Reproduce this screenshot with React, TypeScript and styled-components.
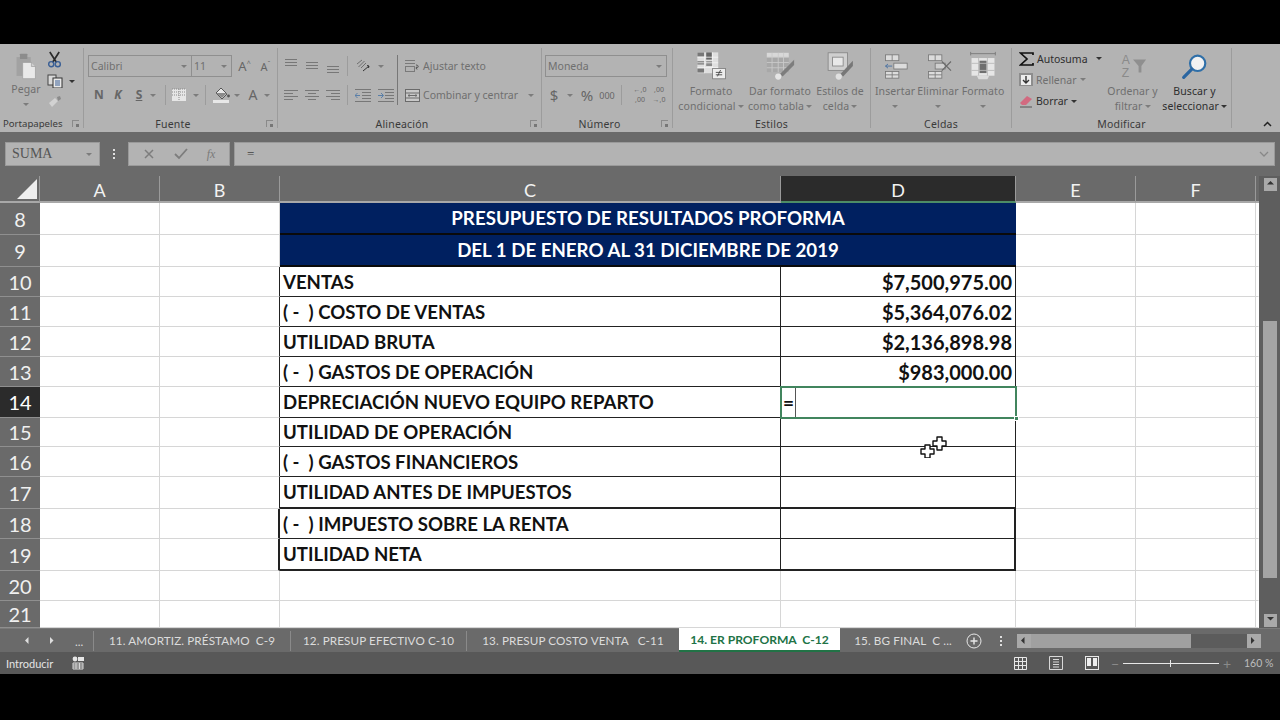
import React from "react";
import styled, { createGlobalStyle } from "styled-components";

const Global = createGlobalStyle`
  html, body { margin: 0; padding: 0; background: #000; }
  * { box-sizing: border-box; }
  #root { width: 1280px; height: 720px; overflow: hidden; }
`;

const UI = `"Noto Sans", "Open Sans", "Liberation Sans", sans-serif`;
const CAL = `Lato, "Open Sans", sans-serif`;
const HEAD = "#6a6a6a";
const RIB = "#b3b3b3";
const DIM = "#6f6f6f";
const INK = "#2e2e2e";

const Page = styled.div`
  width: 1280px;
  height: 720px;
  display: flex;
  flex-direction: column;
  background: #000;
  font-family: ${UI};
`;
const BlackBar = styled.div<{ $h: number }>`
  height: ${(p) => p.$h}px;
  flex: none;
  background: #000;
`;

/* ---------- ribbon ---------- */
const Ribbon = styled.div`
  height: 88px;
  flex: none;
  display: flex;
  background: ${RIB};
  position: relative;
`;
const Group = styled.section<{ $w: number }>`
  width: ${(p) => p.$w}px;
  flex: none;
  margin: 4px 0 4px;
  border-right: 1px solid #9c9c9c;
  display: flex;
  flex-direction: column;
`;
const GroupBody = styled.div<{ $pad?: number }>`
  flex: 1;
  min-height: 0;
  display: flex;
  padding-left: ${(p) => p.$pad ?? 0}px;
`;
const GroupLabel = styled.div<{ $launch?: boolean; $left?: boolean }>`
  height: 16px;
  flex: none;
  position: relative;
  text-align: ${(p) => (p.$left ? "left" : "center")};
  padding-left: ${(p) => (p.$left ? 3 : 0)}px;
  padding-right: ${(p) => (p.$launch ? 15 : 0)}px;
  font-size: ${(p) => (p.$left ? 9.6 : 10.5)}px;
  line-height: 24px;
  color: #3a3a3a;
  letter-spacing: ${(p) => (p.$left ? 0 : 0.2)}px;
  white-space: nowrap;
`;
const Launcher = styled.span`
  position: absolute;
  right: 4px;
  top: 8px;
  width: 7px;
  height: 7px;
  border-left: 1px solid #8a8a8a;
  border-top: 1px solid #8a8a8a;
  &::after {
    content: "";
    position: absolute;
    right: 0;
    bottom: 0;
    width: 3px;
    height: 3px;
    background: #777;
  }
`;
const Stack = styled.div<{ $gap?: number; $pt?: number; $center?: boolean }>`
  display: flex;
  flex-direction: column;
  flex: none;
  align-items: ${(p) => (p.$center ? "center" : "stretch")};
  gap: ${(p) => p.$gap ?? 0}px;
  padding-top: ${(p) => p.$pt ?? 0}px;
`;
const Line = styled.div<{ $gap?: number; $h?: number }>`
  display: flex;
  align-items: center;
  gap: ${(p) => p.$gap ?? 0}px;
  height: ${(p) => p.$h ?? 22}px;
`;
const Caret = styled.i<{ $dark?: boolean }>`
  display: inline-block;
  flex: none;
  width: 0;
  height: 0;
  border-left: 3px solid transparent;
  border-right: 3px solid transparent;
  border-top: 3px solid ${(p) => (p.$dark ? "#333" : "#7c7c7c")};
`;
const Combo = styled.div<{ $w: number; $noLeft?: boolean }>`
  width: ${(p) => p.$w}px;
  height: 22px;
  flex: none;
  border: 1px solid #8f8f8f;
  margin-left: ${(p) => (p.$noLeft ? -1 : 0)}px;
  display: flex;
  align-items: center;
  justify-content: space-between;
  padding: 0 4px 0 2px;
  font-size: 10.5px;
  color: ${DIM};
`;
const Glyph = styled.span<{ $w: number; $size?: number; $weight?: number; $dark?: boolean }>`
  width: ${(p) => p.$w}px;
  flex: none;
  text-align: center;
  font-size: ${(p) => p.$size ?? 12}px;
  font-weight: ${(p) => p.$weight ?? 400};
  color: ${(p) => (p.$dark ? "#333" : "#666")};
  line-height: 1;
`;
const SuperMark = styled.sup`
  font-size: 7px;
  line-height: 0;
  vertical-align: 5px;
`;
const DecStack = styled.span`
  width: 18px;
  flex: none;
  display: flex;
  flex-direction: column;
  align-items: center;
  font-size: 7px;
  line-height: 10px;
  color: #666;
  white-space: nowrap;
`;
const VSep = styled.span<{ $h?: number; $dark?: boolean }>`
  width: 1px;
  height: ${(p) => p.$h ?? 20}px;
  flex: none;
  background: ${(p) => (p.$dark ? "#777" : "#9c9c9c")};
`;
const Small = styled.span<{ $dark?: boolean }>`
  font-size: 10.5px;
  color: ${(p) => (p.$dark ? "#2e2e2e" : DIM)};
  white-space: nowrap;
`;
const BigBtn = styled.div<{ $w: number }>`
  width: ${(p) => p.$w}px;
  flex: none;
  display: flex;
  flex-direction: column;
  align-items: center;
  font-size: 10.5px;
  line-height: 15px;
  color: ${DIM};
  text-align: center;
  white-space: nowrap;
  letter-spacing: 0.1px;
`;
const BigIcon = styled.div`
  height: 36px;
  flex: none;
  display: flex;
  align-items: center;
  justify-content: center;
`;
const BtnText = styled.div<{ $dark?: boolean }>`
  color: ${(p) => (p.$dark ? INK : DIM)};
  display: flex;
  align-items: center;
  gap: 2px;
  justify-content: center;
  height: 15px;
  flex: none;
`;
const Collapse = styled.svg`
  position: absolute;
  right: 8px;
  bottom: 5px;
`;

/* ---------- formula bar ---------- */
const FormulaBand = styled.div`
  height: 44px;
  flex: none;
  background: ${HEAD};
  display: flex;
  align-items: center;
  padding: 0 5px;
`;
const NameBox = styled.div`
  width: 95px;
  height: 24px;
  background: ${RIB};
  border: 1px solid #9a9a9a;
  font-family: "Liberation Serif", serif;
  font-size: 14px;
  color: #555;
  display: flex;
  align-items: center;
  justify-content: space-between;
  padding: 0 7px 0 6px;
`;
const Dots = styled.div`
  width: 28px;
  display: flex;
  flex-direction: column;
  align-items: center;
  gap: 2px;
  & > i {
    width: 2px;
    height: 2px;
    background: #e0e0e0;
  }
`;
const FxBox = styled.div`
  width: 102px;
  height: 24px;
  background: ${RIB};
  border: 1px solid #9a9a9a;
  display: flex;
  align-items: center;
  justify-content: space-around;
  padding: 0 4px;
  margin-right: 4px;
`;
const FxText = styled.span`
  font-family: "Liberation Serif", serif;
  font-style: italic;
  font-size: 12px;
  color: #7a7a7a;
`;
const FormulaInput = styled.div`
  flex: 1;
  height: 24px;
  background: ${RIB};
  border: 1px solid #9a9a9a;
  display: flex;
  align-items: center;
  justify-content: space-between;
  padding: 0 5px 0 12px;
  font-family: "Liberation Serif", serif;
  font-size: 13px;
  color: #444;
`;

/* ---------- sheet ---------- */
const Sheet = styled.div`
  height: 452px;
  flex: none;
  display: flex;
  background: ${HEAD};
  position: relative;
`;
const GridWrap = styled.div`
  width: 1259px;
  flex: none;
  display: grid;
  grid-template-columns: 40px 120px 120px 501px 235px 120px 120px 3px;
  grid-template-rows: 27px 32px 32px 30px 30px 30px 30px 31px 29px 30px 32px 30px 32px 30px 27px;
  background: #fff;
`;
const Corner = styled.div`
  background: ${HEAD};
  border-bottom: 2px solid #a8a8a8;
  border-right: 1px solid #999;
  position: relative;
  &::after {
    content: "";
    position: absolute;
    right: 2px;
    bottom: 2px;
    width: 0;
    height: 0;
    border-left: 20px solid transparent;
    border-bottom: 20px solid #eee;
  }
`;
const ColHead = styled.div<{ $active?: boolean; $blank?: boolean }>`
  background: ${(p) => (p.$active ? "#2b2b2b" : HEAD)};
  border-bottom: 2px solid ${(p) => (p.$active ? "#4d8c66" : "#a8a8a8")};
  border-right: ${(p) => (p.$blank ? "none" : "1px solid #9a9a9a")};
  color: #f2f2f2;
  font-family: ${CAL};
  font-size: 18px;
  display: flex;
  align-items: center;
  justify-content: center;
  padding-top: 2px;
`;
const RowHead = styled.div<{ $active?: boolean }>`
  background: ${(p) => (p.$active ? "#2b2b2b" : HEAD)};
  border-bottom: 1px solid #8f8f8f;
  color: ${(p) => (p.$active ? "#fff" : "#f0f0f0")};
  font-family: ${CAL};
  font-size: 20px;
  display: flex;
  align-items: center;
  justify-content: center;
`;
const Blank = styled.div<{ $right?: string; $bottom?: string; $thick?: boolean }>`
  background: #fff;
  border-right: ${(p) => (p.$thick ? 2 : 1)}px solid ${(p) => p.$right ?? "#d6d6d6"};
  border-bottom: 1px solid ${(p) => p.$bottom ?? "#d6d6d6"};
`;
const TitleCell = styled.div`
  grid-column: span 2;
  background: #002060;
  color: #fff;
  font-family: ${CAL};
  font-weight: 700;
  font-size: 18.7px;
  display: flex;
  align-items: center;
  justify-content: center;
  border-bottom: 2px solid #0a0a0a;
`;
const DataCell = styled.div<{ $amount?: boolean; $heavyBottom?: boolean; $heavyRight?: boolean }>`
  background: #fff;
  border-right: ${(p) => (p.$heavyRight ? 2 : 1)}px solid #222;
  border-bottom: ${(p) => (p.$heavyBottom ? 2 : 1)}px solid #222;
  color: #111;
  font-family: ${CAL};
  font-weight: 700;
  font-size: ${(p) => (p.$amount ? 20 : 18.6)}px;
  white-space: pre;
  display: flex;
  align-items: center;
  justify-content: ${(p) => (p.$amount ? "flex-end" : "flex-start")};
  padding: 0 ${(p) => (p.$amount ? 3 : 0)}px 0 ${(p) => (p.$amount ? 0 : 3)}px;
`;
const ActiveCell = styled.div`
  background: #fff;
  position: relative;
  border: 2px solid #41855e;
  margin: -1px 0 -1px -1px;
  width: calc(100% + 2px);
  display: flex;
  z-index: 2;
`;
const Editor = styled.div`
  width: 14px;
  height: 100%;
  border-right: 1px solid #555;
  color: #111;
  font-family: ${CAL};
  font-weight: 700;
  font-size: 19px;
  line-height: 30px;
  text-align: center;
`;
const FillHandle = styled.span`
  position: absolute;
  right: -4px;
  bottom: -4px;
  width: 5px;
  height: 5px;
  background: #41855e;
  border: 1px solid #fff;
`;
const CursorMark = styled.svg`
  position: absolute;
  left: 920px;
  top: 258px;
  z-index: 3;
`;
const VScroll = styled.div`
  flex: 1;
  display: flex;
  flex-direction: column;
  align-items: center;
  padding: 2px 3px 1px 4px;
  background: #5e5e5e;
`;
const ScrollBtn = styled.div`
  width: 13px;
  height: 13px;
  flex: none;
  background: #a9a9a9;
  display: flex;
  align-items: center;
  justify-content: center;
`;
const VTrack = styled.div`
  flex: 1;
  width: 100%;
  display: flex;
  flex-direction: column;
  padding-top: 130px;
  padding-bottom: 36px;
`;
const VThumb = styled.div`
  flex: 1;
  background: #a4a4a4;
`;

/* ---------- tabs ---------- */
const TabBar = styled.div`
  height: 24px;
  flex: none;
  background: ${HEAD};
  display: flex;
  align-items: center;
  font-family: ${CAL};
  font-size: 11.7px;
  color: #dcdcdc;
  border-top: 1px solid #7a7a7a;
`;
const TabNav = styled.div`
  width: 94px;
  height: 20px;
  flex: none;
  display: flex;
  align-items: center;
  padding-left: 25px;
  gap: 18px;
  border-right: 1px solid #8a8a8a;
`;
const Tab = styled.div<{ $w: number; $sep?: boolean }>`
  width: ${(p) => p.$w}px;
  height: 20px;
  flex: none;
  display: flex;
  align-items: center;
  justify-content: center;
  white-space: pre;
  border-right: ${(p) => (p.$sep ? "1px solid #8a8a8a" : "none")};
  letter-spacing: 0.1px;
  padding-bottom: 1px;
`;
const ActiveTab = styled.div`
  width: 161px;
  height: 24px;
  flex: none;
  margin-top: -1px;
  background: #fff;
  color: #217346;
  font-size: 12.1px;
  font-weight: 700;
  display: flex;
  align-items: center;
  justify-content: center;
  white-space: pre;
  border-bottom: 2px solid #217346;
`;
const TabTools = styled.div`
  width: 51px;
  flex: none;
  display: flex;
  align-items: center;
  gap: 18px;
`;
const MoreDots = styled(Dots)`
  width: auto;
`;
const HScroll = styled.div`
  width: 244px;
  height: 14px;
  flex: none;
  background: #5c5c5c;
  display: flex;
`;
const HBtn = styled(ScrollBtn)`
  width: 14px;
  height: 14px;
`;
const HThumb = styled.div`
  width: 160px;
  background: #a0a0a0;
`;
const Spacer = styled.div`
  flex: 1;
`;

/* ---------- status ---------- */
const StatusBar = styled.div`
  height: 22px;
  flex: none;
  background: #585858;
  display: flex;
  align-items: center;
  padding: 0 8px 0 6px;
  color: #e4e4e4;
  font-family: ${CAL};
  font-size: 11px;
`;
const StatusLeft = styled.div`
  display: flex;
  align-items: center;
  gap: 19px;
  flex: 1;
`;
const ViewIcons = styled.div`
  display: flex;
  align-items: center;
  gap: 22px;
  margin-right: 12px;
`;
const Zoomer = styled.div`
  display: flex;
  align-items: center;
  gap: 4px;
  width: 120px;
  color: #8a8a8a;
  font-size: 14px;
`;
const Slider = styled.div`
  flex: 1;
  height: 1px;
  background: #e8e8e8;
  position: relative;
  &::after {
    content: "";
    position: absolute;
    left: 47px;
    top: -3px;
    width: 1px;
    height: 7px;
    background: #e8e8e8;
  }
`;
const ZoomPct = styled.span`
  margin-left: 13px;
  width: 28px;
  color: #bdbdbd;
  font-size: 10.5px;
  white-space: nowrap;
`;

/* ---------- icons ---------- */
const Align = ({ y, mode }: { y: number; mode: "l" | "c" | "r" }) => {
  const rows = [0, 3, 6, 9];
  return (
    <svg width="14" height="14" viewBox="0 0 14 14" stroke="#777" strokeWidth="1">
      {rows.map((r, i) => {
        const short = i % 2 === 1;
        const x1 = mode === "l" ? 0 : mode === "c" ? (short ? 3 : 0) : short ? 5 : 0;
        const x2 = mode === "l" ? (short ? 9 : 14) : mode === "c" ? (short ? 11 : 14) : 14;
        return <line key={r} x1={x1} x2={x2} y1={y + r + 0.5} y2={y + r + 0.5} />;
      })}
    </svg>
  );
};
const VAlign = ({ y }: { y: number }) => (
  <svg width="14" height="14" viewBox="0 0 14 14" stroke="#777">
    {[0, 3, 6].map((r) => (
      <line key={r} x1="1" x2="13" y1={y + r + 0.5} y2={y + r + 0.5} />
    ))}
  </svg>
);
const Indent = ({ flip }: { flip?: boolean }) => (
  <svg width="16" height="14" viewBox="0 0 16 14" stroke="#777" fill="none">
    <path d="M0 1.5h16M7 4.5h9M7 7.5h9M7 10.5h9M0 13.5h16" />
    <path d={flip ? "M0 7.5h5M3 5l2.5 2.5L3 10" : "M5 7.5H0M2.5 5L0 7.5 2.5 10"} stroke="#5a7fa8" />
  </svg>
);
const Paste = () => (
  <svg width="26" height="28" viewBox="0 0 30 40">
    <rect x="1" y="6" width="21" height="28" fill="#a2a2a2" />
    <rect x="6" y="1" width="11" height="8" rx="1" fill="#8c8c8c" />
    <path d="M10 14h13l6 6v18H10z" fill="#e9e9e9" stroke="#9a9a9a" />
    <path d="M23 14v6h6" fill="#cfcfcf" stroke="#9a9a9a" />
  </svg>
);
const Scissors = () => (
  <svg width="15" height="17" viewBox="0 0 16 18" fill="none">
    <path d="M3 1l7 11M13 1L6 12" stroke="#2b2b2b" strokeWidth="1.8" />
    <circle cx="4.5" cy="14" r="2.7" stroke="#3a5f95" strokeWidth="1.5" />
    <circle cx="11.5" cy="14" r="2.7" stroke="#3a5f95" strokeWidth="1.5" />
  </svg>
);
const CopyIcon = () => (
  <svg width="16" height="14" viewBox="0 0 16 14">
    <rect x="1" y="1" width="8" height="10" fill="#d9d9d9" stroke="#444" />
    <rect x="6" y="4" width="9" height="10" fill="#e8e8e8" stroke="#333" />
    <path d="M8 7h5M8 9h5M8 11h5" stroke="#3a5f95" />
  </svg>
);
const Painter = () => (
  <svg width="16" height="14" viewBox="0 0 16 14">
    <path d="M2 8l6-5 3 3-6 6z" fill="#d2d2d2" />
    <path d="M10 2l3-1 1 3-3 2z" fill="#8a8a8a" />
  </svg>
);
const Borders = () => (
  <svg width="16" height="14" viewBox="0 0 16 14">
    <rect x="1" y="1" width="14" height="12" fill="#e6e6e6" />
    <path d="M1 1h14M1 4h14M1 7h14M8 1v12" stroke="#8a8a8a" strokeDasharray="1 1" />
  </svg>
);
const Fill = () => (
  <svg width="18" height="16" viewBox="0 0 18 16">
    <path d="M8 1l6 6-5 5-6-6z" fill="#e8e8e8" stroke="#555" />
    <path d="M3 6h11l-5 5z" fill="#8a8a8a" />
    <circle cx="15.5" cy="9" r="1.4" fill="#555" />
    <rect x="0" y="13" width="16" height="3" fill="#e8e8e8" />
  </svg>
);
const Orient = () => (
  <svg width="16" height="14" viewBox="0 0 16 14" fill="none" stroke="#6e6e6e">
    <path d="M2 5l5-4M3.5 8l6-6M6 9l5-5" />
    <path d="M8 12l6-5M12 6.5l2 .5-.5 2" stroke="#333" />
  </svg>
);
const Wrap = () => (
  <svg width="17" height="14" viewBox="0 0 17 14" fill="none" stroke="#7a7a7a">
    <path d="M1 1.5h10M1 4.5h10" />
    <rect x="1.5" y="7.5" width="9" height="5" />
    <path d="M12 6c3 0 3 3 0 3l1-1.5M12 9l1 1.5" stroke="#555" />
  </svg>
);
const Merge = () => (
  <svg width="17" height="15" viewBox="0 0 17 15" fill="none" stroke="#6a6a6a">
    <rect x="1.5" y="1.5" width="14" height="12" fill="#c8c8c8" />
    <path d="M1.5 5h14M1.5 10h14M4 7.5h9M4 7.5l1.5-1M4 7.5l1.5 1M13 7.5l-1.5-1M13 7.5l-1.5 1" />
  </svg>
);
const CondFmt = () => (
  <svg width="32" height="28" viewBox="0 0 40 34">
    <rect x="3" y="0" width="26" height="26" fill="#dfdfdf" />
    <path d="M3 0h9v5H3zM3 11h9v4H3zM3 20h9v5H3z" fill="#777" />
    <path d="M14 0h7v9h-7z" fill="#666" />
    <path d="M14 11h8v6h-8z" fill="#8a8a8a" />
    <path d="M3 6h26M3 13h26M3 19h26M12 0v26M22 0v26" stroke="#f4f4f4" />
    <rect x="22" y="20" width="16" height="13" fill="#ededed" stroke="#777" />
    <path d="M26 25h8M26 28h8M28 30l4-8" stroke="#333" fill="none" />
  </svg>
);
const TableFmt = () => (
  <svg width="30" height="30" viewBox="0 0 34 34">
    <rect x="2" y="2" width="25" height="22" fill="#a8a8a8" />
    <rect x="2" y="2" width="25" height="5" fill="#d8d8d8" />
    <path d="M2 7h25M2 13h25M2 19h25M8 2v22M15 2v22M21 2v22" stroke="#c9c9c9" />
    <path d="M33 10L17 26l3 3 13-13z" fill="#7d7d7d" />
    <circle cx="15" cy="29" r="3.5" fill="#e5e5e5" />
  </svg>
);
const CellStyle = () => (
  <svg width="27" height="30" viewBox="0 0 30 34">
    <rect x="1" y="2" width="22" height="20" fill="#cfcfcf" stroke="#888" />
    <rect x="6" y="7" width="12" height="10" fill="#e8e8e8" stroke="#888" />
    <path d="M29 11L15 26l3 3 11-12z" fill="#777" />
    <circle cx="13" cy="29" r="3.5" fill="#e0e0e0" />
  </svg>
);
const CellsA = ({ x }: { x?: boolean }) => (
  <svg width="27" height="25" viewBox="0 0 32 30" fill="#dcdcdc" stroke="#777">
    <rect x="4" y="1" width="16" height="7" />
    <path d="M12 1v7" />
    <rect x="4" y="21" width="16" height="8" />
    <path d="M12 21v8M4 25h16" />
    {x ? (
      <>
        <rect x="12" y="11" width="12" height="7" fill="#cfcfcf" />
        <path d="M20 9l11 11M31 9L20 20" stroke="#6a6a6a" strokeWidth="1.4" fill="none" />
      </>
    ) : (
      <>
        <rect x="14" y="11" width="16" height="7" />
        <path d="M4 14.5h8M4 14.5l3-2.5M4 14.5l3 2.5" stroke="#3f6aa0" fill="none" />
      </>
    )}
  </svg>
);
const CellFmt = () => (
  <svg width="28" height="30" viewBox="0 0 30 34">
    <path d="M1 3h28M1 1v4M29 1v4" stroke="#777" fill="none" />
    <rect x="2" y="8" width="26" height="20" fill="#e6e6e6" />
    <rect x="11" y="11" width="8" height="14" fill="#6f6f6f" />
    <path d="M2 14h26M2 22h26M10 8v20M20 8v20" stroke="#b8b8b8" />
    <path d="M8 28l14 0-2 4H10z" fill="#dcdcdc" />
  </svg>
);
const Sigma = () => (
  <svg width="15" height="14" viewBox="0 0 15 14" fill="none">
    <path d="M14 3V1H1.5L8 7l-6.5 6H14v-2" stroke="#111" strokeWidth="1.7" />
  </svg>
);
const FillDown = () => (
  <svg width="14" height="13" viewBox="0 0 14 13">
    <rect width="14" height="13" fill="#8d8d8d" />
    <rect x="2" y="2" width="10" height="10" fill="#ededed" />
    <path d="M7 3v7M4 7l3 3 3-3" stroke="#333" strokeWidth="1.4" fill="none" />
  </svg>
);
const Eraser = () => (
  <svg width="14" height="13" viewBox="0 0 14 13">
    <path d="M1 8l7-7 5 3-6 6H3z" fill="#d26a80" />
    <path d="M1 12h12" stroke="#555" />
  </svg>
);
const SortIcon = () => (
  <svg width="28" height="28" viewBox="0 0 30 30" fill="none">
    <text x="3" y="13" fontFamily="Liberation Sans" fontSize="13" fill="#8a8a8a">A</text>
    <text x="3" y="27" fontFamily="Liberation Sans" fontSize="13" fill="#8a8a8a">Z</text>
    <path d="M15 8h14l-5 7v7h-3v-7z" fill="#8f8f8f" />
  </svg>
);
const Magnifier = () => (
  <svg width="27" height="27" viewBox="0 0 30 30" fill="none">
    <circle cx="18.5" cy="11.5" r="8.5" fill="#f2f2f2" stroke="#2f6fa8" strokeWidth="2.4" />
    <path d="M12 18L3 27" stroke="#2a65a0" strokeWidth="3.6" strokeLinecap="round" />
  </svg>
);
const Arrow = ({ dir, c = "#dedede", s = 7 }: { dir: "l" | "r" | "u" | "d"; c?: string; s?: number }) => {
  const d = { l: "M4 0v8L0 4z", r: "M0 0v8l4-4z", u: "M0 4h8L4 0z", d: "M0 0h8L4 4z" }[dir];
  return (
    <svg width={s} height={s} viewBox="0 0 8 8">
      <path d={d} fill={c} />
    </svg>
  );
};
const PlusCircle = () => (
  <svg width="16" height="16" viewBox="0 0 16 16" fill="none" stroke="#e8e8e8">
    <circle cx="8" cy="8" r="7" />
    <path d="M8 4.5v7M4.5 8h7" strokeWidth="1.4" />
  </svg>
);
const MacroIcon = () => (
  <svg width="12" height="14" viewBox="0 0 12 14">
    <circle cx="3" cy="3" r="2.4" fill="#e6e6e6" />
    <rect x="6" y="1" width="6" height="4" fill="#e6e6e6" />
    <path d="M1 7h10v6H1zM1 9h10M1 11h10M4 7v6M7.5 7v6" stroke="#d8d8d8" fill="none" />
  </svg>
);
const GridView = () => (
  <svg width="13" height="13" viewBox="0 0 13 13" stroke="#e8e8e8" fill="none">
    <path d="M.5.5h12v12H.5zM.5 4.5h12M.5 8.5h12M4.5.5v12M8.5.5v12" />
  </svg>
);
const PageView = () => (
  <svg width="14" height="14" viewBox="0 0 14 14" stroke="#d8d8d8" fill="none">
    <path d="M.5.5h13v13H.5zM4 3.5h6M4 6h6M4 8.5h6M4 11h6" />
  </svg>
);
const BreakView = () => (
  <svg width="14" height="14" viewBox="0 0 14 14">
    <rect x=".5" y=".5" width="13" height="13" fill="none" stroke="#e8e8e8" />
    <rect x="2" y="2" width="4" height="8" fill="#eee" />
    <rect x="8" y="2" width="4" height="8" fill="#eee" />
  </svg>
);
const CellCursor = () => (
  <CursorMark width="28" height="24" viewBox="0 0 28 24">
    <path
      d="M17 3h5v4h4v5h-4v4h-5v-4h-4V7h4z M5 11h5v4h4v5h-4v4H5v-4H1v-5h4z"
      fill="#fff"
      stroke="#111"
      strokeWidth="1.4"
      strokeLinejoin="round"
    />
  </CursorMark>
);

/* ---------- data ---------- */
const rows: { n: number; label: string; amount?: string }[] = [
  { n: 10, label: "VENTAS", amount: "$7,500,975.00" },
  { n: 11, label: "( -  ) COSTO DE VENTAS", amount: "$5,364,076.02" },
  { n: 12, label: "UTILIDAD BRUTA", amount: "$2,136,898.98" },
  { n: 13, label: "( -  ) GASTOS DE OPERACIÓN", amount: "$983,000.00" },
  { n: 14, label: "DEPRECIACIÓN NUEVO EQUIPO REPARTO" },
  { n: 15, label: "UTILIDAD DE OPERACIÓN" },
  { n: 16, label: "( -  ) GASTOS FINANCIEROS" },
  { n: 17, label: "UTILIDAD ANTES DE IMPUESTOS" },
  { n: 18, label: "( -  ) IMPUESTO SOBRE LA RENTA" },
  { n: 19, label: "UTILIDAD NETA" },
];

const Dd = ({ dark }: { dark?: boolean }) => <Caret $dark={dark} />;

export default function App() {
  return (
    <Page>
      <Global />
      <BlackBar $h={44} />
      <Ribbon>
        <Group $w={84}>
          <GroupBody $pad={10}>
            <Stack $pt={5} $gap={2} $center>
              <Paste />
              <BigBtn $w={32}>
                <BtnText>Pegar</BtnText>
                <BtnText><Dd /></BtnText>
              </BigBtn>
            </Stack>
            <Glyph $w={5} />
            <Stack $pt={2} $gap={3}>
              <Line $h={19}><Scissors /></Line>
              <Line $h={18} $gap={6}><CopyIcon /><Dd dark /></Line>
              <Line $h={18}><Painter /></Line>
            </Stack>
          </GroupBody>
          <GroupLabel $left>Portapapeles<Launcher /></GroupLabel>
        </Group>

        <Group $w={194}>
          <GroupBody $pad={4}>
            <Stack $pt={7} $gap={7}>
              <Line>
                <Combo $w={104}>Calibri<Dd /></Combo>
                <Combo $w={41} $noLeft>11<Dd /></Combo>
                <Glyph $w={25} $size={13}>A<SuperMark>^</SuperMark></Glyph>
                <Glyph $w={17} $size={11}>A<SuperMark>ˇ</SuperMark></Glyph>
              </Line>
              <Line>
                <Glyph $w={5} />
                <Glyph $w={12} $weight={700}>N</Glyph>
                <Glyph $w={8} />
                <Glyph $w={10} $weight={700}><em>K</em></Glyph>
                <Glyph $w={11} />
                <Glyph $w={10} $weight={700}><u>S</u></Glyph>
                <Glyph $w={6} />
                <Dd />
                <Glyph $w={9} />
                <VSep />
                <Glyph $w={5} />
                <Borders />
                <Glyph $w={6} />
                <Dd />
                <Glyph $w={6} />
                <VSep />
                <Glyph $w={7} />
                <Fill />
                <Glyph $w={3} />
                <Dd />
                <Glyph $w={7} />
                <Glyph $w={12} $size={14}>A</Glyph>
                <Glyph $w={5} />
                <Dd />
              </Line>
            </Stack>
          </GroupBody>
          <GroupLabel $launch>Fuente<Launcher /></GroupLabel>
        </Group>

        <Group $w={264}>
          <GroupBody $pad={6}>
            <Stack $pt={7} $gap={7}>
              <Line $gap={7}>
                <VAlign y={0} />
                <VAlign y={3} />
                <VAlign y={7} />
                <VSep />
                <Orient />
                <Dd />
              </Line>
              <Line $gap={7}>
                <Align y={2} mode="l" />
                <Align y={2} mode="c" />
                <Align y={2} mode="r" />
                <VSep />
                <Indent />
                <Indent flip />
              </Line>
            </Stack>
            <Glyph $w={3} />
            <Stack $pt={7}>
              <VSep $h={50} $dark />
            </Stack>
            <Glyph $w={6} />
            <Stack $pt={7} $gap={7}>
              <Line $gap={2}><Wrap /><Small>Ajustar texto</Small></Line>
              <Line $gap={2}><Merge /><Small>Combinar y centrar</Small><Glyph $w={6} /><Dd /></Line>
            </Stack>
          </GroupBody>
          <GroupLabel $launch>Alineación<Launcher /></GroupLabel>
        </Group>

        <Group $w={131}>
          <GroupBody $pad={3}>
            <Stack $pt={7} $gap={7}>
              <Combo $w={122}>Moneda<Dd /></Combo>
              <Line>
                <Glyph $w={18} $size={15}>$</Glyph>
                <Glyph $w={4} />
                <Dd />
                <Glyph $w={6} />
                <Glyph $w={16} $size={15}>%</Glyph>
                <Glyph $w={3} />
                <Glyph $w={18} $size={9}>000</Glyph>
                <Glyph $w={5} />
                <VSep />
                <Glyph $w={9} />
                <DecStack><span>←,0</span><span>,00</span></DecStack>
                <Glyph $w={1} />
                <DecStack><span>,00</span><span>→,0</span></DecStack>
              </Line>
            </Stack>
          </GroupBody>
          <GroupLabel $launch>Número<Launcher /></GroupLabel>
        </Group>

        <Group $w={198}>
          <GroupBody $pad={5}>
            <BigBtn $w={66}>
              <BigIcon><CondFmt /></BigIcon>
              <BtnText>Formato</BtnText>
              <BtnText>condicional<Dd /></BtnText>
            </BigBtn>
            <BigBtn $w={72}>
              <BigIcon><TableFmt /></BigIcon>
              <BtnText>Dar formato</BtnText>
              <BtnText>como tabla<Dd /></BtnText>
            </BigBtn>
            <BigBtn $w={48}>
              <BigIcon><CellStyle /></BigIcon>
              <BtnText>Estilos de</BtnText>
              <BtnText>celda<Dd /></BtnText>
            </BigBtn>
          </GroupBody>
          <GroupLabel>Estilos</GroupLabel>
        </Group>

        <Group $w={141}>
          <GroupBody $pad={2}>
            <BigBtn $w={44}>
              <BigIcon><CellsA /></BigIcon>
              <BtnText>Insertar</BtnText>
              <BtnText><Dd /></BtnText>
            </BigBtn>
            <BigBtn $w={42}>
              <BigIcon><CellsA x /></BigIcon>
              <BtnText>Eliminar</BtnText>
              <BtnText><Dd /></BtnText>
            </BigBtn>
            <BigBtn $w={48}>
              <BigIcon><CellFmt /></BigIcon>
              <BtnText>Formato</BtnText>
              <BtnText><Dd /></BtnText>
            </BigBtn>
          </GroupBody>
          <GroupLabel>Celdas</GroupLabel>
        </Group>

        <Group $w={220}>
          <GroupBody $pad={7}>
            <Stack>
              <Line $gap={3}><Sigma /><Small $dark>Autosuma</Small><Glyph $w={2} /><Dd dark /></Line>
              <Line $gap={3}><FillDown /><Small>Rellenar</Small><Dd /></Line>
              <Line $gap={3}><Eraser /><Small $dark>Borrar</Small><Dd dark /></Line>
            </Stack>
            <Glyph $w={4} />
            <BigBtn $w={54}>
              <BigIcon><SortIcon /></BigIcon>
              <BtnText>Ordenar y</BtnText>
              <BtnText>filtrar<Dd /></BtnText>
            </BigBtn>
            <Glyph $w={3} />
            <BigBtn $w={64}>
              <BigIcon><Magnifier /></BigIcon>
              <BtnText $dark>Buscar y</BtnText>
              <BtnText $dark>seleccionar<Dd dark /></BtnText>
            </BigBtn>
          </GroupBody>
          <GroupLabel>Modificar</GroupLabel>
        </Group>
        <Collapse width="9" height="6" viewBox="0 0 9 6" fill="none">
          <path d="M1 5l3.5-3.5L8 5" stroke="#222" strokeWidth="1.5" />
        </Collapse>
      </Ribbon>

      <FormulaBand>
        <NameBox>SUMA<Caret /></NameBox>
        <Dots><i /><i /><i /></Dots>
        <FxBox>
          <svg width="12" height="12" viewBox="0 0 12 12" stroke="#7d7d7d" strokeWidth="1.5"><path d="M2 2l8 8M10 2l-8 8" /></svg>
          <svg width="14" height="12" viewBox="0 0 14 12" stroke="#7d7d7d" strokeWidth="1.8" fill="none"><path d="M1 6l4 4 8-9" /></svg>
          <FxText>fx</FxText>
        </FxBox>
        <FormulaInput>
          =
          <svg width="10" height="6" viewBox="0 0 10 6" fill="none" stroke="#888" strokeWidth="1.3"><path d="M1 1l4 4 4-4" /></svg>
        </FormulaInput>
      </FormulaBand>

      <Sheet>
        <GridWrap>
          <Corner />
          <ColHead>A</ColHead>
          <ColHead>B</ColHead>
          <ColHead>C</ColHead>
          <ColHead $active>D</ColHead>
          <ColHead>E</ColHead>
          <ColHead>F</ColHead>
          <ColHead $blank />

          <RowHead>8</RowHead>
          <Blank />
          <Blank />
          <TitleCell>PRESUPUESTO DE RESULTADOS PROFORMA</TitleCell>
          <Blank />
          <Blank />
          <Blank $right="#fff" />

          <RowHead>9</RowHead>
          <Blank />
          <Blank />
          <TitleCell>DEL 1 DE ENERO AL 31 DICIEMBRE DE 2019</TitleCell>
          <Blank />
          <Blank />
          <Blank $right="#fff" />

          {rows.map((r) => {
            const heavyBottom = r.n === 17 || r.n === 19;
            const heavySides = r.n === 18 || r.n === 19;
            return (
              <React.Fragment key={r.n}>
                <RowHead $active={r.n === 14}>{r.n}</RowHead>
                <Blank />
                <Blank $right="#222" $thick={heavySides} />
                <DataCell $heavyBottom={heavyBottom}>{r.label}</DataCell>
                {r.n === 14 ? (
                  <ActiveCell>
                    <Editor>=</Editor>
                    <FillHandle />
                  </ActiveCell>
                ) : (
                  <DataCell $amount $heavyBottom={heavyBottom} $heavyRight={heavySides}>{r.amount}</DataCell>
                )}
                <Blank />
                <Blank />
                <Blank $right="#fff" />
              </React.Fragment>
            );
          })}

          <RowHead>20</RowHead>
          <Blank /><Blank /><Blank /><Blank /><Blank /><Blank /><Blank $right="#fff" />
          <RowHead>21</RowHead>
          <Blank /><Blank /><Blank /><Blank /><Blank /><Blank /><Blank $right="#fff" />
        </GridWrap>
        <VScroll>
          <ScrollBtn><Arrow dir="u" c="#333" /></ScrollBtn>
          <VTrack><VThumb /></VTrack>
          <ScrollBtn><Arrow dir="d" c="#333" /></ScrollBtn>
        </VScroll>
        <CellCursor />
      </Sheet>

      <TabBar>
        <TabNav>
          <Arrow dir="l" />
          <Arrow dir="r" />
          <span>...</span>
        </TabNav>
        <Tab $w={197} $sep>{"11. AMORTIZ. PRÉSTAMO  C-9"}</Tab>
        <Tab $w={176} $sep>12. PRESUP EFECTIVO C-10</Tab>
        <Tab $w={212}>{"13. PRESUP COSTO VENTA   C-11"}</Tab>
        <ActiveTab>{"14. ER PROFORMA  C-12"}</ActiveTab>
        <Tab $w={126}>{"15. BG FINAL  C ..."}</Tab>
        <TabTools>
          <PlusCircle />
          <MoreDots><i /><i /><i /></MoreDots>
        </TabTools>
        <HScroll>
          <HBtn><Arrow dir="l" c="#333" /></HBtn>
          <HThumb />
          <Spacer />
          <HBtn><Arrow dir="r" c="#333" /></HBtn>
        </HScroll>
      </TabBar>

      <StatusBar>
        <StatusLeft>
          Introducir
          <MacroIcon />
        </StatusLeft>
        <ViewIcons>
          <GridView />
          <PageView />
          <BreakView />
        </ViewIcons>
        <Zoomer>
          −<Slider />+
        </Zoomer>
        <ZoomPct>160 %</ZoomPct>
      </StatusBar>
      <BlackBar $h={46} />
    </Page>
  );
}
